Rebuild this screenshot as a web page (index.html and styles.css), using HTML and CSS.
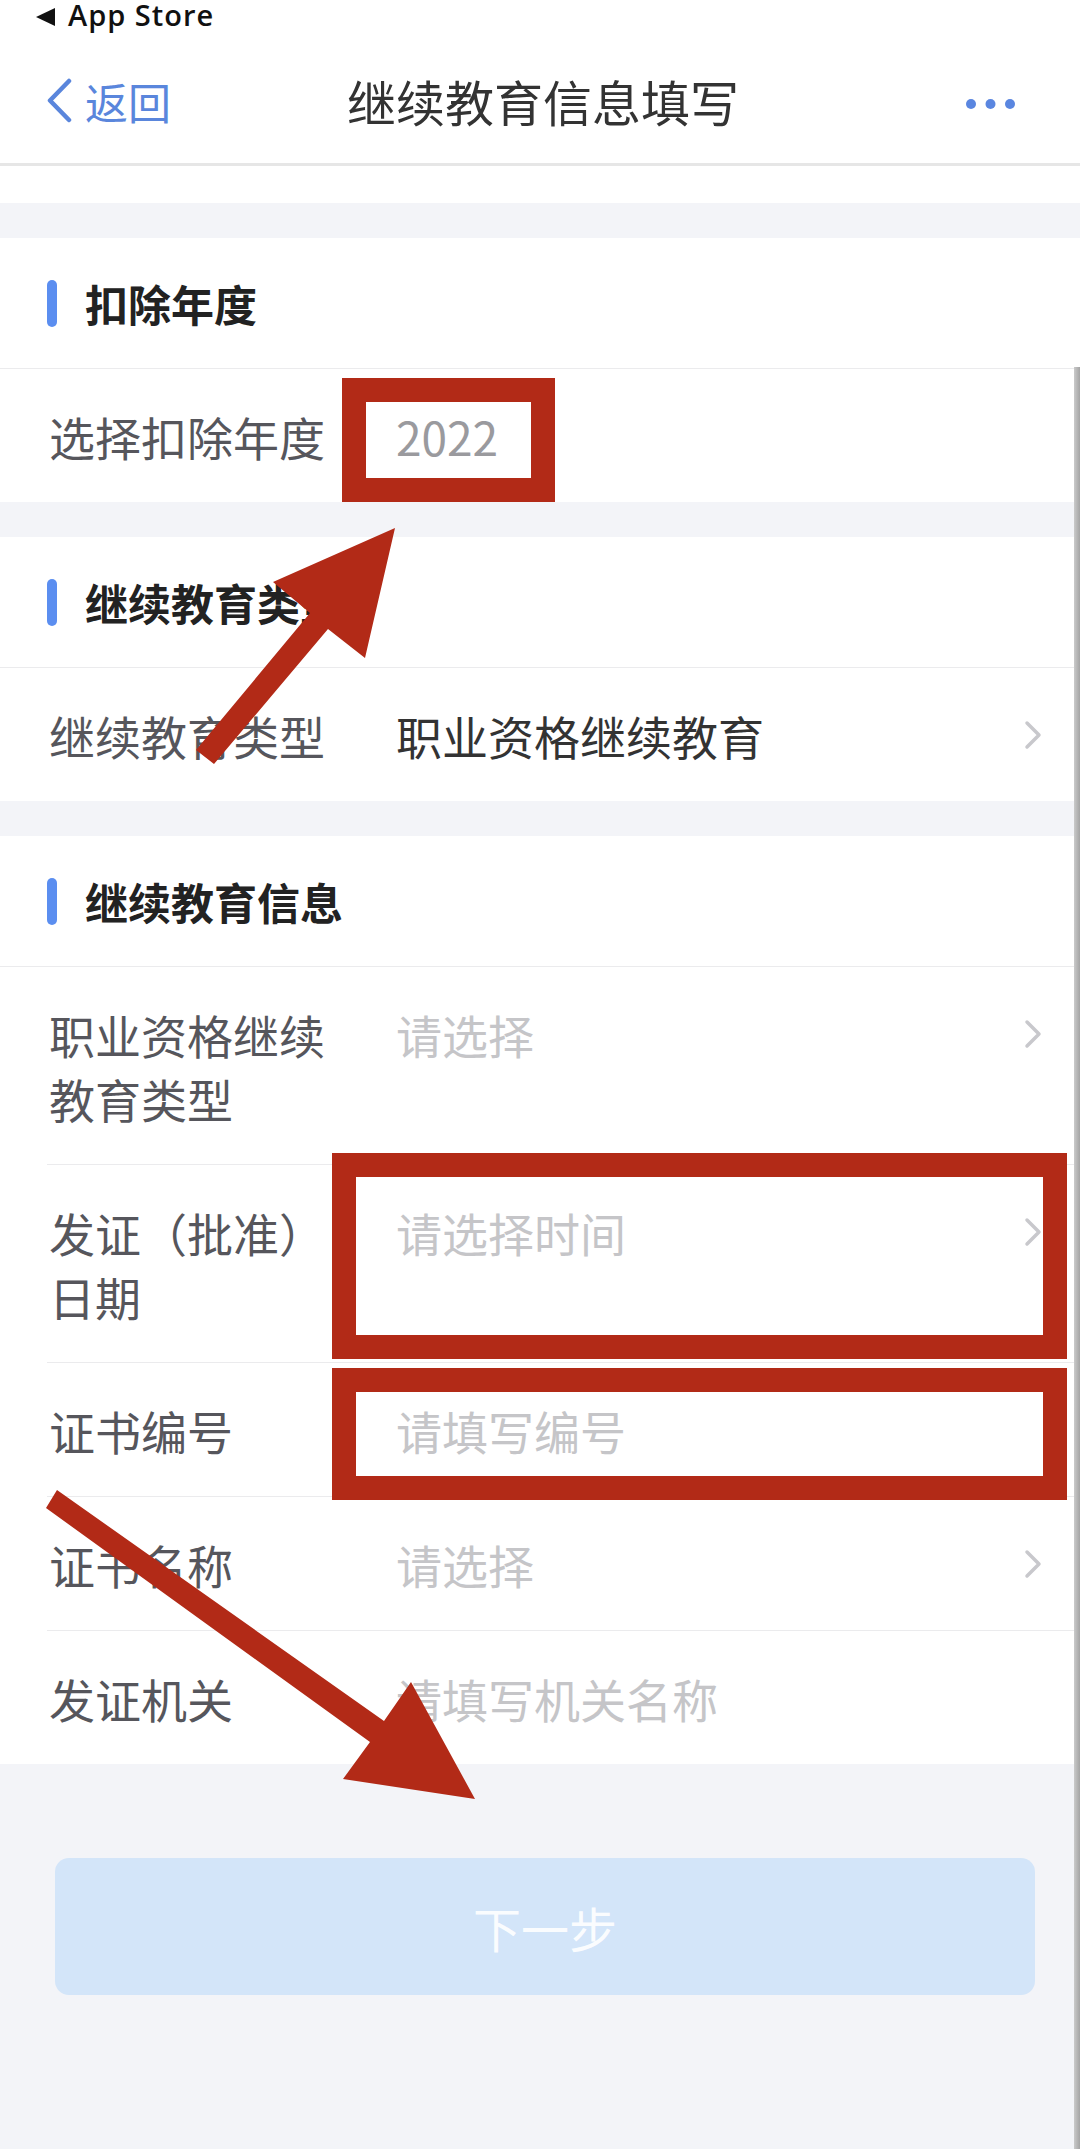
FILE: index.html
```html
<!DOCTYPE html>
<html lang="zh-CN">
<head>
	<meta charset="UTF-8">
	<title>继续教育信息填写</title>
	<link rel="stylesheet" href="styles.css">
</head>
<body>
	<div class="page">
		<div class="status"><span class="tri"></span>App Store</div>
		<header class="nav">
			<a class="back">
				<svg width="28" height="45" viewBox="0 0 28 45"><polyline points="24,3 5,22.5 24,42" fill="none" stroke="#5a86dc" stroke-width="4.5" stroke-linecap="round" stroke-linejoin="round"/></svg>
				<span>返回</span>
			</a>
			<h1>继续教育信息填写</h1>
			<div class="more">
				<svg width="50" height="12" viewBox="0 0 50 12"><circle cx="5" cy="6" r="5" fill="#5a86e0"/><circle cx="24.5" cy="6" r="5" fill="#5a86e0"/><circle cx="44" cy="6" r="5" fill="#5a86e0"/></svg>
			</div>
		</header>
		<div class="spacer"></div>

		<!-- 扣除年度 -->
		<section class="group">
			<div class="group-title"><i class="mark"></i>扣除年度</div>
			<div class="row">
				<div class="label">选择扣除年度</div>
				<div class="value muted">2022</div>
			</div>
		</section>

		<!-- 继续教育类型 -->
		<section class="group">
			<div class="group-title"><i class="mark"></i>继续教育类型</div>
			<div class="row">
				<div class="label">继续教育类型</div>
				<div class="value">职业资格继续教育</div>
				<div class="chev"><svg width="20" height="30" viewBox="0 0 20 30"><polyline points="4,3 16,15 4,27" fill="none" stroke="#c8c8cc" stroke-width="3.5" stroke-linecap="round" stroke-linejoin="round"/></svg></div>
			</div>
		</section>

		<!-- 继续教育信息 -->
		<section class="group list">
			<div class="group-title"><i class="mark"></i>继续教育信息</div>
			<div class="row">
				<div class="label">职业资格继续教育类型</div>
				<div class="value ph">请选择</div>
				<div class="chev"><svg width="20" height="30" viewBox="0 0 20 30"><polyline points="4,3 16,15 4,27" fill="none" stroke="#c8c8cc" stroke-width="3.5" stroke-linecap="round" stroke-linejoin="round"/></svg></div>
			</div>
			<div class="row">
				<div class="label">发证（批准）日期</div>
				<div class="value ph">请选择时间</div>
				<div class="chev"><svg width="20" height="30" viewBox="0 0 20 30"><polyline points="4,3 16,15 4,27" fill="none" stroke="#c8c8cc" stroke-width="3.5" stroke-linecap="round" stroke-linejoin="round"/></svg></div>
			</div>
			<div class="row">
				<div class="label">证书编号</div>
				<div class="value ph">请填写编号</div>
			</div>
			<div class="row">
				<div class="label">证书名称</div>
				<div class="value ph">请选择</div>
				<div class="chev"><svg width="20" height="30" viewBox="0 0 20 30"><polyline points="4,3 16,15 4,27" fill="none" stroke="#c8c8cc" stroke-width="3.5" stroke-linecap="round" stroke-linejoin="round"/></svg></div>
			</div>
			<div class="row">
				<div class="label">发证机关</div>
				<div class="value ph">请填写机关名称</div>
			</div>
		</section>

		<div class="footer">
			<button class="next">下一步</button>
		</div>

		<!-- anotaciones -->
		<div class="box box-year"></div>
		<div class="box box-date"></div>
		<div class="box box-code"></div>
		<svg class="arrows" viewBox="0 0 1080 2149">
			<polygon points="196,750 310,613 273,582 395,528 365,658 328,629 214,764" fill="#b22a17"/>
			<polygon points="57,1490 384,1721 411,1682 475,1799 343,1779 370,1742 46,1508" fill="#b22a17"/>
		</svg>
		<div class="scroll"></div>
	</div>
</body>
</html>
```

FILE: styles.css
```css
body {
	margin: 0;
	background: #f3f4f8;
	font-family: "Noto Sans CJK SC", "Noto Sans", sans-serif;
}
.page {
	position: relative;
	width: 1080px;
	min-height: 2149px;
	overflow: hidden;
}
/* status + nav */
.status {
	height: 38px;
	background: #fff;
	display: flex;
	align-items: flex-start;
	padding-left: 36px;
	font: 600 29px/30px "Open Sans", sans-serif;
	letter-spacing: 1px;
	color: #111;
}
.status .tri {
	width: 0;
	height: 0;
	border-top: 9px solid transparent;
	border-bottom: 9px solid transparent;
	border-right: 19px solid #111;
	margin: 8px 13px 0 0;
}
.nav {
	height: 125px;
	background: #fff;
	border-bottom: 3px solid #e6e6e6;
	display: grid;
	grid-template-columns: 1fr auto 1fr;
	align-items: center;
}
.nav .back {
	display: flex;
	align-items: center;
	gap: 12px;
	padding-left: 45px;
	color: #5a86dc;
	font-size: 43px;
}
.nav h1 {
	margin: 0 0 0 6px;
	font-size: 49px;
	font-weight: 400;
	color: #333;
}
.nav .more {
	justify-self: end;
	padding-right: 64px;
	display: flex;
	margin-top: 6px;
}
.spacer {
	height: 37px;
	background: #fff;
}
/* groups */
.group {
	background: #fff;
	margin-top: 35px;
}
.group-title {
	height: 130px;
	border-bottom: 1px solid #ebebed;
	display: flex;
	align-items: center;
	padding-left: 47px;
	font-size: 43px;
	font-weight: 700;
	color: #222;
}
.group-title .mark {
	width: 10px;
	height: 47px;
	border-radius: 5px;
	background: #5b8ef0;
	margin-right: 28px;
}
.row {
	display: flex;
	align-items: flex-start;
	padding: 35px 37px 34px 49px;
	font-size: 46px;
	line-height: 64px;
}
.list .row {
	margin-left: 47px;
	padding-left: 2px;
}
.list .row + .row {
	border-top: 1px solid #ebebed;
}
.row .label {
	width: 300px;
	margin-right: 47px;
	flex-shrink: 0;
	color: #56565c;
}
.row .value {
	flex: 1;
	color: #333;
}
.row .value.muted {color: #9a9a9e;}
.row .value.ph {color: #c5c5c8;}
.row .chev {
	height: 64px;
	display: flex;
	align-items: center;
}
/* footer */
.footer {
	padding: 94px 0 0 55px;
}
.next {
	display: block;
	width: 980px;
	height: 137px;
	border: none;
	border-radius: 14px;
	background: #d3e5f9;
	color: rgba(255,255,255,.92);
	font-family: inherit;
	font-size: 48px;
}
/* overlays */
.box {
	position: absolute;
	box-sizing: border-box;
	border: 24px solid #b22a17;
}
.box-year {left: 342px; top: 378px; width: 213px; height: 124px;}
.box-date {left: 332px; top: 1153px; width: 735px; height: 206px;}
.box-code {left: 332px; top: 1368px; width: 735px; height: 132px;}
.arrows {
	position: absolute;
	left: 0; top: 0;
	width: 1080px;
	height: 2149px;
	pointer-events: none;
}
.scroll {
	position: absolute;
	right: 0;
	top: 367px;
	bottom: 0;
	width: 6px;
	background: linear-gradient(to right, #cacaca, #a4a4a4);
}
```
